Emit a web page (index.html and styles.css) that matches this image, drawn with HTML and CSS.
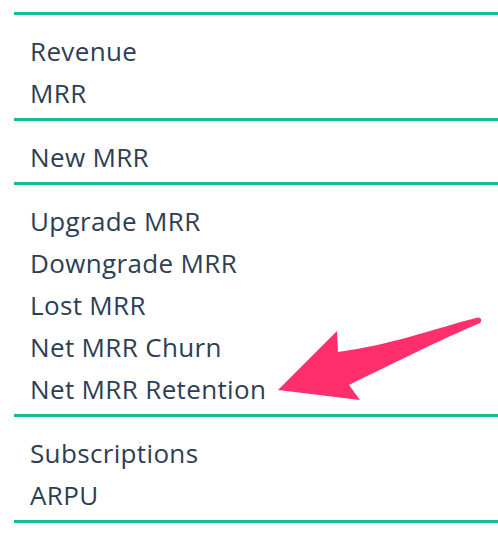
FILE: index.html
```html
<!DOCTYPE html>
<html>
<head>
<meta charset="utf-8">
<link rel="stylesheet" href="styles.css">
</head>
<body>
<div class="menu">
  <div class="section">
    <div class="item">Revenue</div>
    <div class="item">MRR</div>
  </div>
  <div class="section">
    <div class="item">New MRR</div>
  </div>
  <div class="section">
    <div class="item">Upgrade MRR</div>
    <div class="item">Downgrade MRR</div>
    <div class="item">Lost MRR</div>
    <div class="item">Net MRR Churn</div>
    <div class="item">Net MRR Retention</div>
  </div>
  <div class="section last">
    <div class="item">Subscriptions</div>
    <div class="item">ARPU</div>
  </div>
</div>
<svg class="arrow" width="498" height="540" viewBox="0 0 498 540">
  <path d="M278 390 L360 400 L349 385 C 400 360, 440 340, 480 323 C 483 320, 480 316, 476 318 C 430 330, 390 345, 338 352 L337 331 Z" fill="#fe2f6c"/>
</svg>
</body>
</html>
```
FILE: styles.css
```css
html, body {
  margin: 0;
  padding: 0;
  background: #ffffff;
}
body {
  position: relative;
  width: 498px;
  height: 540px;
  overflow: hidden;
}
.menu {
  padding: 12px 0 0 14px;
  font-family: "Open Sans", "DejaVu Sans", sans-serif;
  font-size: 26px;
  letter-spacing: 0.35px;
  color: #2d3e54;
}
.section {
  border-top: 3px solid #13bd97;
  padding: 15px 0 4px 16px;
}
.section.last {
  border-bottom: 3px solid #13bd97;
}
.item {
  line-height: 42px;
  height: 42px;
}
.arrow {
  position: absolute;
  left: 0;
  top: 0;
}
```
